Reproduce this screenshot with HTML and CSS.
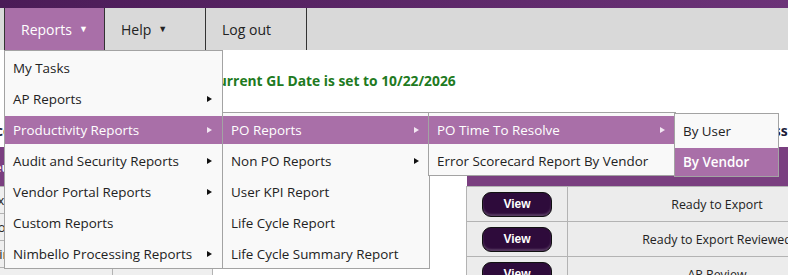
FILE: index.html
```html
<!DOCTYPE html>
<html lang="en">
<head>
  <meta charset="UTF-8" />
  <meta name="viewport" content="width=device-width, initial-scale=1.0" />
  <title>Dashboard</title>
  <link rel="stylesheet" href="styles.css">
</head>
<body>
  <div class="topbar"></div>
  <nav class="nav">
    <div class="nav-item active">Reports <span class="caret">&#9660;</span>
      <ul class="menu main-menu">
        <li>My Tasks</li>
        <li class="has-sub">AP Reports</li>
        <li class="has-sub open">Productivity Reports
          <ul class="menu sub sub-2">
            <li class="has-sub open">PO Reports
              <ul class="menu sub sub-3">
                <li class="has-sub open">PO Time To Resolve
                  <ul class="menu sub sub-4">
                    <li>By User</li>
                    <li class="hover">By Vendor</li>
                  </ul>
                </li>
                <li>Error Scorecard Report By Vendor</li>
              </ul>
            </li>
            <li class="has-sub">Non PO Reports</li>
            <li>User KPI Report</li>
            <li>Life Cycle Report</li>
            <li>Life Cycle Summary Report</li>
          </ul>
        </li>
        <li class="has-sub">Audit and Security Reports</li>
        <li class="has-sub">Vendor Portal Reports</li>
        <li>Custom Reports</li>
        <li class="has-sub">Nimbello Processing Reports</li>
      </ul>
    </div>
    <div class="nav-item">Help <span class="caret">&#9660;</span></div>
    <div class="nav-item">Log out</div>
  </nav>

  <main class="content">
    <p class="gl-date">Current GL Date is set to 10/22/2026</p>
    <div class="panels">
      <section class="panel panel-left">
        <h3>Invoice Queue Summary</h3>
        <table class="grid">
          <colgroup><col class="c-name"><col class="c-count"></colgroup>
          <tr class="head"><th>Queue</th><th>Count</th></tr>
          <tr><td>Pending Exceptions</td><td>0</td></tr>
          <tr><td>Coding In Progress Sync</td><td>0</td></tr>
          <tr><td>Coding</td><td>0</td></tr>
          <tr><td>Pending Manager Approval</td><td>0</td></tr>
        </table>
      </section>
      <section class="panel panel-right">
        <h3>Summary of Documents In Process</h3>
        <table class="grid status">
          <colgroup><col class="c-btn"><col class="c-status"></colgroup>
          <tr class="head"><th></th><th>Status</th></tr>
          <tr><td><button class="view">View</button></td><td>Ready to Export</td></tr>
          <tr><td><button class="view">View</button></td><td>Ready to Export Reviewed</td></tr>
          <tr><td><button class="view">View</button></td><td>AP Review</td></tr>
        </table>
      </section>
    </div>
  </main>
</body>
</html>
```

FILE: styles.css
```css
body {
  margin: 0;
  padding: 0;
  font-family: 'Open Sans', 'Noto Sans', sans-serif;
  color: #222;
  background: #fff;
  overflow: hidden;
}
.topbar {
  height: 8px;
  background: linear-gradient(90deg, #4b1b57, #6c3378);
}
.nav {
  display: flex;
  height: 42px;
  padding-left: 4px;
  background: #d9d9d9;
}
.nav-item {
  position: relative;
  width: 101px;
  box-sizing: border-box;
  border-left: 1px solid #333;
  display: flex;
  align-items: center;
  padding-left: 16px;
  font-size: 14px;
  color: #222;
  gap: 7px;
}
.nav-item:first-child { width: 100px; }
.nav-item:last-child { border-right: 1px solid #333; width: 102px; }
.nav-item.active { background: #a96fa8; color: #fff; }
.caret { font-size: 9px; position: relative; top: -1px; }

/* dropdown menus */
.menu {
  list-style: none;
  margin: 0;
  padding: 3px 0 0;
  position: absolute;
  background: #f9f9f9;
  border: 1px solid #a3a3a3;
  display: flex;
  flex-direction: column;
  gap: 3px;
  z-index: 10;
  text-align: left;
}
.main-menu { left: -1px; top: 100%; width: 219px; box-sizing: border-box; }
.menu li {
  position: relative;
  height: 28px;
  line-height: 28px;
  padding-left: 8px;
  font-size: 13.4px;
  color: #222;
  white-space: nowrap;
}
.menu li.has-sub::after {
  content: "";
  position: absolute;
  right: 10px;
  top: 11px;
  border-left: 5px solid #111;
  border-top: 3.5px solid transparent;
  border-bottom: 3.5px solid transparent;
}
.menu li.open, .menu li.hover { background: #a96fa8; color: #fff; }
.menu li.open::after { border-left-color: #f2e6f2; }
.menu li.hover { font-weight: 600; }
.sub { top: -4px; left: 100%; font-weight: 400; }
.sub-2 { width: 208px; box-sizing: border-box; }
.sub-3 { width: 248px; box-sizing: border-box; left: calc(100% - 1px); }
.sub-4 { width: 105px; box-sizing: border-box; left: calc(100% - 1px); top: -3px; }
.sub li { color: #222; }

/* page content */
.gl-date {
  margin: 21px 0 0 209px;
  font-size: 13.8px;
  font-weight: bold;
  color: #217a21;
}
.panels {
  display: flex;
  margin-top: 31px;
  gap: 253px;
}
.panel h3 {
  margin: 0 0 7px;
  font-size: 14px;
  text-align: center;
  color: #1d1d3a;
}
.panel-left { margin-left: -120px; }
.grid {
  border-collapse: collapse;
  table-layout: fixed;
  font-size: 13px;
}
.panel-left .grid { width: 332px; }
.c-name { width: 232px; }
.c-count { width: 100px; }
.grid .head th {
  background: #7a3f80;
  color: #fff;
  height: 37px;
  font-weight: 600;
}
.grid td {
  border: 1px solid #b3b3b3;
  background: #efefef;
  text-align: center;
  height: 26px;
  padding: 0;
  white-space: nowrap;
  overflow: hidden;
}
.status { width: 400px; }
.c-btn { width: 101px; }
.c-status { width: 299px; }
.status td { height: 34px; background: #ececec; font-size: 12.4px; }
.view {
  width: 70px;
  height: 25px;
  border-radius: 9px;
  border: 1px solid #111;
  background: #2e0b3b;
  color: #fff;
  font-family: 'Liberation Sans', Arial, sans-serif;
  font-weight: bold;
  font-size: 12px;
  box-shadow: inset 0 -2px 2px rgba(255,255,255,0.2);
}
```
